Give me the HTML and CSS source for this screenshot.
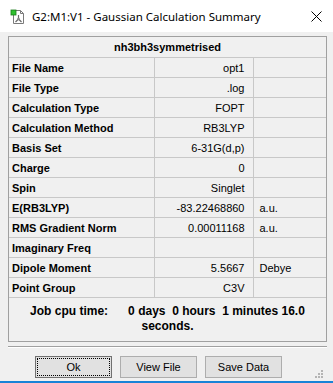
FILE: index.html
```html
<!DOCTYPE html>
<html>
<head>
<meta charset="utf-8">
<link rel="stylesheet" href="styles.css">
</head>
<body>
<div class="window">
  <header class="titlebar">
    <svg class="appicon" width="16" height="16" viewBox="0 0 16 16">
      <path d="M3.5 1.5h7l3 3v10h-10z" fill="#fff" stroke="#7a7a7a"/>
      <path d="M10.5 1.5v3h3" fill="none" stroke="#7a7a7a"/>
      <rect x="1" y="1" width="5" height="5" fill="#2fc12f" stroke="#1a7a1a" stroke-width="0.8"/>
      <path d="M8.5 6v4M8.5 10l-3 3M8.5 10l3 3" stroke="#6a6a6a" stroke-width="1.2" fill="none"/>
      <circle cx="8.5" cy="10" r="1.3" fill="#8a8a8a"/>
    </svg>
    <span class="title">G2:M1:V1 - Gaussian Calculation Summary</span>
    <svg class="close" width="11" height="11" viewBox="0 0 11 11">
      <path d="M0.5 0.5l10 10M10.5 0.5l-10 10" stroke="#000" stroke-width="1"/>
    </svg>
  </header>
  <main class="content">
    <section class="summary">
      <table class="grid">
        <colgroup><col class="c1"><col class="c2"><col class="c3"></colgroup>
        <tr class="head"><th colspan="3">nh3bh3symmetrised</th></tr>
        <tr><th>File Name</th><td class="val">opt1</td><td></td></tr>
        <tr><th>File Type</th><td class="val">.log</td><td></td></tr>
        <tr><th>Calculation Type</th><td class="val">FOPT</td><td></td></tr>
        <tr><th>Calculation Method</th><td class="val">RB3LYP</td><td></td></tr>
        <tr><th>Basis Set</th><td class="val">6-31G(d,p)</td><td></td></tr>
        <tr><th>Charge</th><td class="val">0</td><td></td></tr>
        <tr><th>Spin</th><td class="val">Singlet</td><td></td></tr>
        <tr><th>E(RB3LYP)</th><td class="val">-83.22468860</td><td class="unit">a.u.</td></tr>
        <tr><th>RMS Gradient Norm</th><td class="val">0.00011168</td><td class="unit">a.u.</td></tr>
        <tr><th>Imaginary Freq</th><td class="val"></td><td></td></tr>
        <tr><th>Dipole Moment</th><td class="val">5.5667</td><td class="unit">Debye</td></tr>
        <tr><th>Point Group</th><td class="val">C3V</td><td></td></tr>
      </table>
      <div class="cpu">Job cpu time:      0 days  0 hours  1 minutes 16.0<br>seconds.</div>
    </section>
    <div class="sep"></div>
    <div class="buttons">
      <button class="btn default"><span class="focus">Ok</span></button>
      <button class="btn">View File</button>
      <button class="btn">Save Data</button>
      <svg class="grip" width="8" height="8" viewBox="0 0 8 8">
        <g fill="#b4b4b4">
          <rect x="6" y="0" width="2" height="2"/>
          <rect x="3" y="3" width="2" height="2"/><rect x="6" y="3" width="2" height="2"/>
          <rect x="0" y="6" width="2" height="2"/><rect x="3" y="6" width="2" height="2"/><rect x="6" y="6" width="2" height="2"/>
        </g>
      </svg>
    </div>
  </main>
</div>
</body>
</html>
```

FILE: styles.css
```css
html, body {
  margin: 0;
  padding: 0;
}
body {
  width: 333px;
  height: 383px;
  overflow: hidden;
  background: #f0f0f0;
  font-family: "Liberation Sans", Arial, sans-serif;
  font-size: 11px;
  color: #000;
}
.window {
  height: 383px;
  display: flex;
  flex-direction: column;
  box-sizing: border-box;
  border-bottom: 2px solid #1883d7;
}
.titlebar {
  height: 32px;
  background: #fff;
  display: flex;
  align-items: center;
  padding-left: 10px;
  padding-right: 11px;
  box-sizing: border-box;
  flex-shrink: 0;
}
.appicon {
  flex-shrink: 0;
  margin-top: 1px;
}
.title {
  margin-left: 6px;
  font-family: "Noto Sans", "Open Sans", sans-serif;
  font-size: 11.5px;
  flex: 1;
}
.close {
  flex-shrink: 0;
  margin-top: 1px;
}
.content {
  flex: 1;
  padding: 4px 6px 0 8px;
  display: flex;
  flex-direction: column;
}
.summary {
  border: 1px solid #a0a0a0;
}
.grid {
  width: 100%;
  border-collapse: collapse;
  table-layout: fixed;
}
.c1 { width: 145px; }
.c2 { width: 99px; }
.c3 { width: auto; }
.grid th, .grid td {
  border: 1px solid #c8c8c8;
  height: 18px;
  padding: 0;
  line-height: 13px;
  white-space: nowrap;
  overflow: hidden;
}
.grid tr:first-child th { border-top: none; }
.grid th:first-child, .grid td:first-child { border-left: none; }
.grid tr > :last-child { border-right: none; }
.grid th {
  text-align: left;
  font-weight: bold;
  padding-left: 3px;
  padding-top: 1px;
}
.grid tr.head th {
  height: 19px;
  text-align: center;
  padding-left: 0;
}
.grid td.val {
  text-align: right;
  padding-right: 8px;
  padding-top: 1px;
}
.grid td.unit {
  padding-left: 6px;
  padding-top: 1px;
}
.cpu {
  white-space: pre-wrap;
  text-align: center;
  font-weight: bold;
  font-size: 12px;
  line-height: 15px;
  padding: 6px 0 7px;
}
.sep {
  margin-top: 4px;
  border-top: 1px solid #a0a0a0;
  border-bottom: 1px solid #fff;
  height: 0;
}
.buttons {
  display: flex;
  align-items: flex-start;
  gap: 8px;
  padding-left: 27px;
  margin-top: 8px;
  position: relative;
  flex: 1;
}
.btn {
  width: 77px;
  height: 22px;
  box-sizing: border-box;
  background: #e1e1e1;
  border: 1px solid #adadad;
  border-radius: 0;
  font-family: "Liberation Sans", Arial, sans-serif;
  font-size: 11px;
  color: #000;
  padding: 0;
  margin: 0;
}
.btn.default {
  border: 1px solid #707070;
  padding: 1px;
}
.btn .focus {
  display: flex;
  align-items: center;
  justify-content: center;
  height: 100%;
  border: 1px dotted #000;
  box-sizing: border-box;
}
.grip {
  position: absolute;
  right: 4px;
  bottom: 3px;
}
```
